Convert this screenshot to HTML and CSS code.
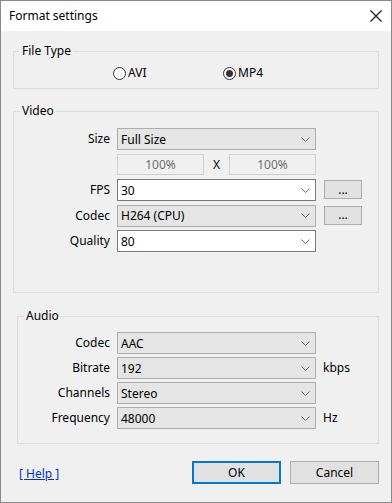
FILE: index.html
```html
<!DOCTYPE html>
<html lang="en">
<head>
    <meta charset="UTF-8">
    <title>Format settings</title>
    <link rel="stylesheet" href="styles.css">
</head>
<body>
<div class="dialog">
    <div class="titlebar">
        <span class="title">Format settings</span>
        <svg class="close" width="12" height="12" viewBox="0 0 12 12"><path d="M0.5 0.5L11.5 11.5M11.5 0.5L0.5 11.5" stroke="#111" stroke-width="1.1" fill="none"/></svg>
    </div>

    <!-- File type -->
    <fieldset class="group filetype">
        <legend>File Type</legend>
        <div class="radios">
            <label class="radio"><span class="circle"></span>AVI</label>
            <label class="radio checked"><span class="circle"></span>MP4</label>
        </div>
    </fieldset>

    <!-- Video -->
    <fieldset class="group video">
        <legend>Video</legend>
        <div class="form">
            <span class="lbl">Size</span>
            <div class="combo ro"><span>Full Size</span><svg class="chev" width="9" height="5" viewBox="0 0 9 5"><path d="M0.5 0.5L4.5 4.5L8.5 0.5" stroke="#707070" fill="none"/></svg></div>
            <span></span>

            <span class="lbl"></span>
            <div class="pct">
                <div class="pct-box">100%</div>
                <span class="x">X</span>
                <div class="pct-box">100%</div>
            </div>
            <span></span>

            <span class="lbl">FPS</span>
            <div class="combo"><span>30</span><svg class="chev" width="9" height="5" viewBox="0 0 9 5"><path d="M0.5 0.5L4.5 4.5L8.5 0.5" stroke="#707070" fill="none"/></svg></div>
            <button class="more">...</button>

            <span class="lbl">Codec</span>
            <div class="combo ro"><span>H264 (CPU)</span><svg class="chev" width="9" height="5" viewBox="0 0 9 5"><path d="M0.5 0.5L4.5 4.5L8.5 0.5" stroke="#707070" fill="none"/></svg></div>
            <button class="more">...</button>

            <span class="lbl">Quality</span>
            <div class="combo"><span>80</span><svg class="chev" width="9" height="5" viewBox="0 0 9 5"><path d="M0.5 0.5L4.5 4.5L8.5 0.5" stroke="#707070" fill="none"/></svg></div>
            <span></span>
        </div>
    </fieldset>

    <!-- Audio -->
    <fieldset class="group audio">
        <legend>Audio</legend>
        <div class="form">
            <span class="lbl">Codec</span>
            <div class="combo ro"><span>AAC</span><svg class="chev" width="9" height="5" viewBox="0 0 9 5"><path d="M0.5 0.5L4.5 4.5L8.5 0.5" stroke="#707070" fill="none"/></svg></div>
            <span></span>

            <span class="lbl">Bitrate</span>
            <div class="combo ro"><span>192</span><svg class="chev" width="9" height="5" viewBox="0 0 9 5"><path d="M0.5 0.5L4.5 4.5L8.5 0.5" stroke="#707070" fill="none"/></svg></div>
            <span class="unit">kbps</span>

            <span class="lbl">Channels</span>
            <div class="combo ro"><span>Stereo</span><svg class="chev" width="9" height="5" viewBox="0 0 9 5"><path d="M0.5 0.5L4.5 4.5L8.5 0.5" stroke="#707070" fill="none"/></svg></div>
            <span></span>

            <span class="lbl">Frequency</span>
            <div class="combo ro"><span>48000</span><svg class="chev" width="9" height="5" viewBox="0 0 9 5"><path d="M0.5 0.5L4.5 4.5L8.5 0.5" stroke="#707070" fill="none"/></svg></div>
            <span class="unit">Hz</span>
        </div>
    </fieldset>

    <div class="footer">
        <a href="#" class="help">[ Help ]</a>
        <div class="actions">
            <button class="btn default">OK</button>
            <button class="btn">Cancel</button>
        </div>
    </div>
</div>
</body>
</html>
```

FILE: styles.css
```css
body { margin: 0; font-family: "Noto Sans", "Open Sans", sans-serif; font-size: 12px; color: #000; }
.dialog { width: 392px; height: 503px; box-sizing: border-box; border: 1px solid #8a8a8a; background: #f0f0f0; }
.titlebar { height: 30px; background: #fff; display: flex; align-items: center; justify-content: space-between; padding: 0 9px 0 8px; }
.title { line-height: 16px; }

.group { margin: 0; padding: 0; border: 1px solid #dcdcdc; box-sizing: border-box; min-width: 0; }
.group legend { margin-left: 6px; padding: 0 2px; line-height: 16px; }
.filetype { margin: 12px 0 0 12px; width: 366px; padding: 6px 0 7px; }
.video { margin: 14px 0 0 12px; width: 366px; padding: 9px 0 40px; }
.audio { margin: 15px 0 0 16px; width: 362px; padding: 8px 0 14px; }

.radios { display: flex; padding-left: 99px; height: 16px; }
.radio { display: flex; align-items: center; width: 110px; line-height: 16px; }
.circle { width: 13px; height: 13px; box-sizing: border-box; border: 1px solid #333; border-radius: 50%; background: #fff; margin-right: 2px; display: flex; align-items: center; justify-content: center; }
.radio.checked .circle::after { content: ""; width: 7px; height: 7px; border-radius: 50%; background: #333; }

.form { display: grid; grid-template-columns: 96px 199px 1fr; grid-auto-rows: 22px; column-gap: 7px; row-gap: 3.5px; }
.audio .form { grid-template-columns: 92px 199px 1fr; row-gap: 3px; }
.lbl { text-align: right; align-self: center; line-height: 16px; }
.unit { align-self: center; line-height: 16px; }

.combo { display: flex; align-items: center; justify-content: space-between; box-sizing: border-box; border: 1px solid #7a7a7a; background: #fff; padding: 0 5px 0 3px; }
.combo.ro { background: #e5e5e5; border-color: #adadad; }
.chev { flex: none; }

.pct { display: flex; align-items: center; height: 21px; }
.pct-box { width: 87px; height: 21px; box-sizing: border-box; border: 1px solid #d0d0d0; background: #f0f0f0; color: #6d6d6d; text-align: center; line-height: 19px; }
.x { flex: 1; text-align: center; }

.more { width: 38px; height: 19px; margin: 1px 0 0 1px; padding: 0; box-sizing: border-box; border: 1px solid #adadad; background: #e1e1e1; font: inherit; line-height: 12px; }

.footer { display: flex; align-items: center; justify-content: space-between; margin-top: 17px; padding: 0 12px 0 18px; }
.help { color: #0033cc; line-height: 16px; margin-top: 3px; }
.actions { display: flex; gap: 9px; }
.btn { width: 89px; height: 23px; box-sizing: border-box; border: 1px solid #adadad; background: #e1e1e1; font: inherit; padding: 0; }
.btn.default { border: 2px solid #0078d7; }
```
